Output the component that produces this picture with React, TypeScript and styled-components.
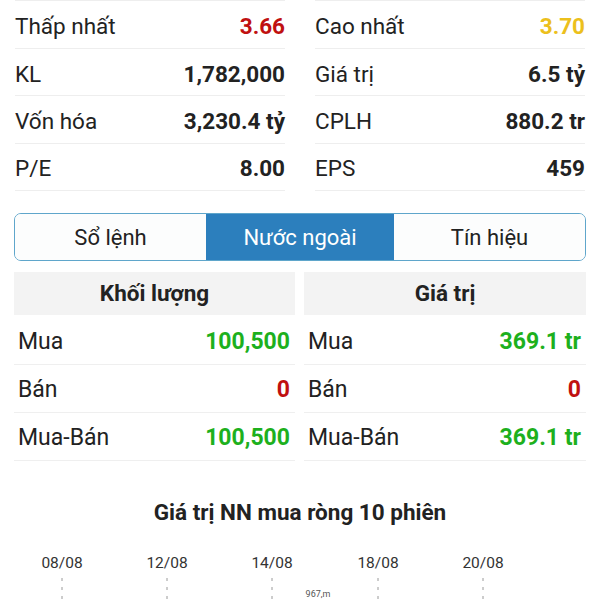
import React from 'react';
import styled, { createGlobalStyle } from 'styled-components';

const GlobalStyle = createGlobalStyle`
  body {
    margin: 0;
    background: #ffffff;
    font-family: Roboto, "Noto Sans", Arial, sans-serif;
    color: #222222;
  }
`;

type Tone = 'red' | 'yellow' | 'green' | 'dark';

const toneColor: Record<Tone, string> = {
  red: '#c01010',
  yellow: '#ecc01c',
  green: '#1db01d',
  dark: '#222222',
};

const stats: { label: string; value: string; tone: Tone }[][] = [
  [
    { label: 'Thấp nhất', value: '3.66', tone: 'red' },
    { label: 'KL', value: '1,782,000', tone: 'dark' },
    { label: 'Vốn hóa', value: '3,230.4 tỷ', tone: 'dark' },
    { label: 'P/E', value: '8.00', tone: 'dark' },
  ],
  [
    { label: 'Cao nhất', value: '3.70', tone: 'yellow' },
    { label: 'Giá trị', value: '6.5 tỷ', tone: 'dark' },
    { label: 'CPLH', value: '880.2 tr', tone: 'dark' },
    { label: 'EPS', value: '459', tone: 'dark' },
  ],
];

const foreign: { title: string; rows: { label: string; value: string; tone: Tone }[] }[] = [
  {
    title: 'Khối lượng',
    rows: [
      { label: 'Mua', value: '100,500', tone: 'green' },
      { label: 'Bán', value: '0', tone: 'red' },
      { label: 'Mua-Bán', value: '100,500', tone: 'green' },
    ],
  },
  {
    title: 'Giá trị',
    rows: [
      { label: 'Mua', value: '369.1 tr', tone: 'green' },
      { label: 'Bán', value: '0', tone: 'red' },
      { label: 'Mua-Bán', value: '369.1 tr', tone: 'green' },
    ],
  },
];

const tabs = ['Sổ lệnh', 'Nước ngoài', 'Tín hiệu'];

// x positions of the session ticks on the chart
const dates = [
  { label: '08/08', x: 62 },
  { label: '12/08', x: 167 },
  { label: '14/08', x: 272 },
  { label: '18/08', x: 378 },
  { label: '20/08', x: 483 },
];

const App: React.FC = () => {
  return (
    <Page>
      <GlobalStyle />
      <StatsGrid>
        {stats.map((col, ci) => (
          <StatsColumn key={ci}>
            {col.map((s) => (
              <StatRow key={s.label}>
                <StatLabel>{s.label}</StatLabel>
                <StatValue tone={s.tone}>{s.value}</StatValue>
              </StatRow>
            ))}
          </StatsColumn>
        ))}
      </StatsGrid>

      <TabBar>
        {tabs.map((t, i) => (
          <Tab key={t} active={i === 1}>
            {t}
          </Tab>
        ))}
      </TabBar>

      <ForeignGrid>
        {foreign.map((panel) => (
          <Panel key={panel.title}>
            <PanelHeader>{panel.title}</PanelHeader>
            {panel.rows.map((r) => (
              <PanelRow key={r.label}>
                <RowLabel>{r.label}</RowLabel>
                <RowValue tone={r.tone}>{r.value}</RowValue>
              </PanelRow>
            ))}
          </Panel>
        ))}
      </ForeignGrid>

      <ChartTitle>Giá trị NN mua ròng 10 phiên</ChartTitle>
      <ChartSvg viewBox="0 0 600 60">
        {dates.map((d) => (
          <g key={d.label}>
            <text
              x={d.x}
              y="23"
              textAnchor="middle"
              fontSize="15.5"
              fill="#333333"
              fontFamily="Roboto, sans-serif"
            >
              {d.label}
            </text>
            <line
              x1={d.x}
              y1="33"
              x2={d.x}
              y2="60"
              stroke="#9a9a9a"
              strokeWidth="1"
              strokeDasharray="3 6"
            />
          </g>
        ))}
        <text
          x="318"
          y="52"
          textAnchor="middle"
          fontSize="9"
          fill="#555555"
          fontFamily="Roboto, sans-serif"
        >
          967,m
        </text>
      </ChartSvg>
    </Page>
  );
};

const Page = styled.div`
  width: 600px;
  height: 600px;
  overflow: hidden;
  box-sizing: border-box;
  padding: 0 15px;
  display: flex;
  flex-direction: column;
`;

const StatsGrid = styled.div`
  display: grid;
  grid-template-columns: 1fr 1fr;
  column-gap: 30px;
`;

const StatsColumn = styled.div`
  display: flex;
  flex-direction: column;
  border-top: 1px solid #eeeeee;
`;

const StatRow = styled.div`
  height: 47.3px;
  box-sizing: border-box;
  padding-top: 3px;
  display: flex;
  align-items: center;
  justify-content: space-between;
  border-bottom: 1px solid #eeeeee;
  &:first-child {
    height: 48px;
  }
`;

const StatLabel = styled.span`
  font-size: 22.5px;
  color: #222222;
`;

const StatValue = styled.span<{ tone: Tone }>`
  font-size: 22.5px;
  font-weight: 700;
  color: ${(p) => toneColor[p.tone]};
`;

const TabBar = styled.div`
  flex: none;
  margin: 22px -1px 0;
  height: 48px;
  box-sizing: border-box;
  display: grid;
  grid-template-columns: 191px 188px 1fr;
  border: 1.5px solid #5fa6cb;
  border-radius: 7px;
  overflow: hidden;
`;

const Tab = styled.div<{ active: boolean }>`
  display: flex;
  align-items: center;
  justify-content: center;
  padding-top: 2px;
  font-size: 22px;
  background: ${(p) => (p.active ? '#2c7fbd' : '#fcfdfd')};
  color: ${(p) => (p.active ? '#ffffff' : '#222222')};
`;

const ForeignGrid = styled.div`
  margin: 11px -1px 0;
  display: grid;
  grid-template-columns: 281px 1fr;
  column-gap: 9px;
`;

const Panel = styled.div`
  display: flex;
  flex-direction: column;
`;

const PanelHeader = styled.div`
  height: 43px;
  display: flex;
  align-items: center;
  justify-content: center;
  background: #f3f3f3;
  font-size: 22.5px;
  font-weight: 700;
  color: #222222;
  margin-bottom: 2px;
`;

const PanelRow = styled.div`
  height: 48px;
  box-sizing: border-box;
  padding: 3px 5px 0 4px;
  display: flex;
  align-items: center;
  justify-content: space-between;
  border-bottom: 1px solid #efefef;
`;

const RowLabel = styled.span`
  font-size: 23px;
  color: #222222;
`;

const RowValue = styled.span<{ tone: Tone }>`
  font-size: 23px;
  font-weight: 700;
  color: ${(p) => toneColor[p.tone]};
`;

const ChartTitle = styled.div`
  margin-top: 38px;
  text-align: center;
  font-size: 22.5px;
  font-weight: 700;
  color: #222222;
`;

const ChartSvg = styled.svg`
  display: block;
  flex: none;
  align-self: center;
  width: 600px;
  height: 60px;
  margin-top: 20px;
`;

export default App;
